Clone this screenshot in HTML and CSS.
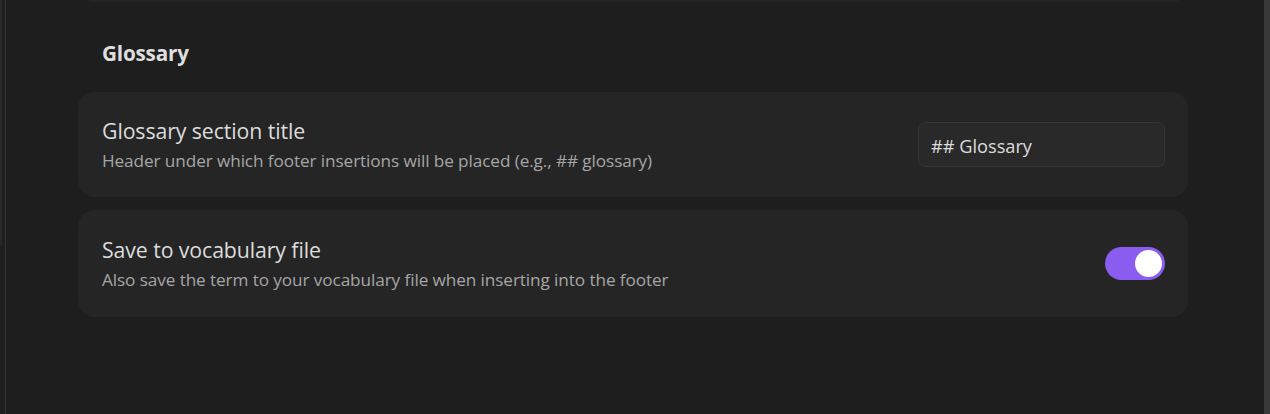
FILE: index.html
```html
<!DOCTYPE html>
<html lang="en">
<head>
<meta charset="utf-8">
<title>Settings</title>
<link rel="stylesheet" href="styles.css">
</head>
<body>
<div class="app">
  <div class="side"><div class="side-strip"></div></div>
  <main class="main">
    <div class="prev-card"></div>
    <h3 class="group-title">Glossary</h3>
    <div class="setting">
      <div class="info">
        <div class="name">Glossary section title</div>
        <div class="desc">Header under which footer insertions will be placed (e.g., ## glossary)</div>
      </div>
      <div class="control">
        <input class="text-input" type="text" value="## Glossary">
      </div>
    </div>
    <div class="setting">
      <div class="info">
        <div class="name">Save to vocabulary file</div>
        <div class="desc">Also save the term to your vocabulary file when inserting into the footer</div>
      </div>
      <div class="control">
        <div class="toggle on"><div class="knob"></div></div>
      </div>
    </div>
  </main>
  <div class="scrollbar"></div>
</div>
</body>
</html>
```

FILE: styles.css
```css
* { box-sizing: border-box; }
html, body {
  margin: 0;
  padding: 0;
  height: 100%;
  background: #1e1e1e;
  overflow: hidden;
}
body {
  font-family: "Open Sans", "Noto Sans", sans-serif;
  color: #dadada;
}
.app {
  display: flex;
  height: 414px;
}
.side {
  width: 6px;
  flex: none;
  border-right: 1px solid #343434;
}
.side-strip {
  width: 2px;
  height: 245px;
  background: #282828;
}
.main {
  flex: 1;
  padding: 0 76px 0 72px;
  display: flex;
  flex-direction: column;
}
.scrollbar {
  width: 6px;
  flex: none;
  background: #383838;
}
.prev-card {
  height: 40px;
  margin-top: -38px;
  border-radius: 16px;
  background: #252525;
}
.group-title {
  margin: 37px 0 25px 24px;
  font-size: 20.7px;
  font-weight: 700;
  line-height: 28px;
  color: #dedede;
  letter-spacing: -0.2px;
}
.setting {
  display: flex;
  align-items: center;
  justify-content: space-between;
  background: #252525;
  border-radius: 16px;
  padding: 0 23px 0 24px;
  height: 105px;
  margin-bottom: 13px;
}
.setting + .setting { height: 107px; }
.info {
  display: flex;
  flex-direction: column;
  gap: 6px;
}
.name {
  font-size: 21.3px;
  line-height: 26px;
  color: #dcdcdc;
  letter-spacing: -0.1px;
}
.desc {
  font-size: 17.2px;
  line-height: 22px;
  color: #a6a6a6;
  letter-spacing: -0.1px;
}
.text-input {
  width: 247px;
  height: 45px;
  background: #292929;
  border: 1px solid #363636;
  border-radius: 7px;
  padding: 2px 12px 0;
  font-family: "Open Sans", "Noto Sans", sans-serif;
  font-size: 18.2px;
  color: #dcdcdc;
  outline: none;
}
.toggle {
  width: 60px;
  height: 33px;
  border-radius: 17px;
  background: #4a4a4a;
  display: flex;
  align-items: center;
  padding: 0 3px;
}
.toggle.on {
  background: #8b5cf0;
  justify-content: flex-end;
}
.knob {
  width: 27px;
  height: 27px;
  border-radius: 50%;
  background: #ffffff;
}
```
